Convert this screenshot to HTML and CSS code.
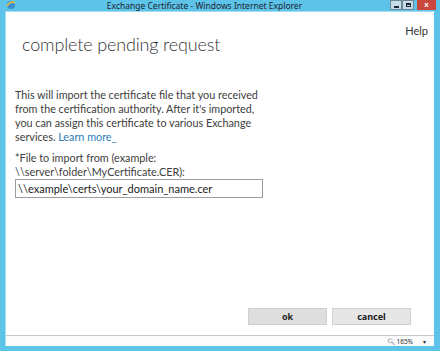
FILE: index.html
```html
<!DOCTYPE html>
<html>
<head>
<meta charset="utf-8">
<link rel="stylesheet" href="styles.css">
</head>
<body>
<div class="window">
  <div class="titlebar">
    <svg class="ie-icon" width="10" height="10" viewBox="0 0 10 10"><circle cx="5" cy="5" r="4" fill="#3b8fd6"/><path d="M1 6 Q5 0 9 3" stroke="#f2c230" stroke-width="1.4" fill="none"/></svg>
    <div class="title">Exchange Certificate - Windows Internet Explorer</div>
    <div class="controls">
      <div class="ctl min"><span class="min-bar"></span></div>
      <div class="ctl max"><span class="max-box"></span></div>
      <div class="ctl close">x</div>
    </div>
  </div>
  <div class="client">
    <div class="page">
      <div class="header">
        <h1 class="heading">complete pending request</h1>
        <a class="help">Help</a>
      </div>
      <p class="intro">This will import the certificate file that you received from the certification authority. After it's imported, you can assign this certificate to various Exchange services. <a class="link">Learn more_</a></p>
      <label class="field-label">*File to import from (example: \\server\folder\MyCertificate.CER):</label>
      <div class="input">\\example\certs\your_domain_name.cer</div>
    </div>
    <div class="actions">
      <div class="btn">ok</div>
      <div class="btn btn-cancel">cancel</div>
    </div>
    <div class="statusbar">
      <span class="zoom">&#128269;&#xFE0E; 165%</span>
      <span class="caret">&#9662;</span>
    </div>
  </div>
</div>
</body>
</html>
```
FILE: styles.css
```css
* { box-sizing: border-box; }
html, body { margin: 0; padding: 0; }
body { width: 440px; height: 351px; overflow: hidden; font-family: "Lato", "Noto Sans", sans-serif; }
.window {
  width: 440px; height: 351px;
  background: #5ec3e8;
  display: flex; flex-direction: column;
  padding: 0 6px 5px 5px;
}
.titlebar {
  height: 11px; display: flex; align-items: center; position: relative;
  flex: none;
}
.ie-icon { position: absolute; left: 1px; top: 0; }
.title {
  flex: 1; text-align: center; font-size: 8.5px; color: #1a2530;
  font-family: "Noto Sans", sans-serif; line-height: 11px; padding-left: 14px;
}
.controls { display: flex; align-self: flex-start; height: 10px; margin-right: -2px; }
.ctl { width: 12px; height: 10px; display: flex; align-items: center; justify-content: center; }
.min, .max { background: #c6dbe6; border: 1px solid #6a8796; }
.min-bar { width: 5px; height: 2px; background: #1d2a33; margin-top: 3px; }
.max-box { width: 5px; height: 4px; border: 1px solid #1d2a33; border-top-width: 2px; }
.close { width: 19px; background: #c9473d; color: #fff; font-size: 8px; font-weight: bold; line-height: 10px; margin-left: 3px; font-family: "Liberation Sans", sans-serif; }
.client {
  flex: 1; background: #fff; display: flex; flex-direction: column;
  border-left: 1px solid #a8dcef; border-top: 1px solid #a8dcef;
}
.page { flex: 1; padding: 0 0 0 9px; color: #3b3b3b; }
.header { display: flex; justify-content: space-between; align-items: flex-start; }
.heading {
  margin: 20px 0 0 7px; font-size: 18px; font-weight: 300; color: #333;
  font-family: "Lato", "Open Sans", sans-serif; line-height: 24px; letter-spacing: -0.15px;
}
.help { margin: 12px 6px 0 0; font-size: 11px; color: #333; line-height: 14px; }
.intro {
  margin: 32px 0 0 0; width: 245px; font-size: 10.8px; line-height: 14px; color: #3d3d3d;
}
.link { color: #2a7bb8; display: inline-block; }
.field-label { display: block; margin-top: 7px; width: 245px; font-size: 10.8px; line-height: 14px; color: #3d3d3d; }
.input {
  margin-top: 0; width: 248px; height: 19px; border: 1px solid #9c9c9c;
  font-size: 11px; line-height: 17px; padding-left: 2px; color: #222;
}
.actions { display: flex; gap: 5px; padding: 0 23px 10px 0; justify-content: flex-end; }
.btn {
  width: 79px; height: 17px; background: #dedede; border: 1px solid #cfcfcf;
  font-size: 9px; font-weight: bold; color: #222; text-align: center; line-height: 15px;
  font-family: "Noto Sans", sans-serif;
}
.btn-cancel { background: #e6e6e6; }
.statusbar {
  height: 11px; border-top: 1px solid #c4c4c4; display: flex; justify-content: flex-end;
  align-items: center; padding-right: 8px; gap: 10px; background: #fbfbfb;
}
.zoom { font-size: 6.5px; color: #333; font-family: "Noto Sans", sans-serif; }
.caret { font-size: 6px; color: #333; }
```
